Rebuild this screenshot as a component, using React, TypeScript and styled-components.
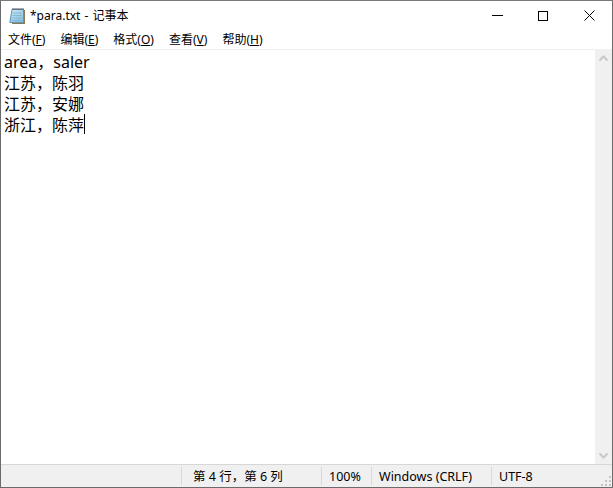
import styled, { createGlobalStyle } from 'styled-components'

const GlobalStyle = createGlobalStyle`
  html, body {
    margin: 0;
    padding: 0;
    background: #fff;
  }
`

const uiFont = `"Noto Sans", "Noto Sans CJK SC", sans-serif`

const Window = styled.div`
  box-sizing: border-box;
  width: 613px;
  height: 488px;
  border: 1px solid #6b6b6b;
  border-top-color: #7a7a7a;
  display: flex;
  flex-direction: column;
  background: #fff;
  font-family: ${uiFont};
  color: #000;
`

const TitleBar = styled.div`
  height: 29px;
  display: flex;
  align-items: center;
  flex: none;
`

const AppIcon = styled.svg`
  width: 17px;
  height: 18px;
  margin-left: 8px;
  flex: none;
`

const Title = styled.div`
  margin-left: 4px;
  font-size: 12px;
  line-height: 29px;
  word-spacing: 1px;
  flex: 1;
  white-space: pre;
`

const WinButtons = styled.div`
  display: flex;
`

const WinButton = styled.div`
  width: 46px;
  height: 29px;
  display: flex;
  align-items: center;
  justify-content: center;
  flex: none;
`

const MenuBar = styled.div`
  height: 19px;
  padding: 1px 0 0 7px;
  box-sizing: border-box;
  display: flex;
  gap: 15px;
  align-items: center;
  font-size: 12px;
  flex: none;
`

const MenuItem = styled.span`
  white-space: pre;
  line-height: 18px;
  u {
    text-underline-offset: 1px;
  }
`

const Divider = styled.div`
  height: 1px;
  background: #f0f0f0;
  flex: none;
`

const Body = styled.div`
  flex: 1;
  min-height: 0;
  display: flex;
`

const Editor = styled.div`
  flex: 1;
  padding: 2px 0 0 3px;
  font-size: 16px;
  line-height: 21px;
`

const Line = styled.div`
  height: 21px;
  white-space: pre;
  display: flex;
  align-items: center;
`

const Caret = styled.span`
  width: 1px;
  height: 20px;
  margin-top: -1px;
  align-self: flex-start;
  background: #000;
  flex: none;
`

const ScrollBar = styled.div`
  width: 17px;
  background: #f0f0f0;
  display: flex;
  flex-direction: column;
  justify-content: space-between;
  align-items: center;
  flex: none;
`

const ScrollArrow = styled.svg`
  width: 17px;
  height: 17px;
  display: block;
`

const StatusBar = styled.div`
  height: 22px;
  flex: none;
  background: #f0f0f0;
  border-top: 1px solid #d7d7d7;
  display: flex;
  align-items: stretch;
  font-size: 12.5px;
  position: relative;
`

const StatusCell = styled.div<{ $width: number; $pad: number; $first?: boolean }>`
  width: ${p => p.$width}px;
  box-sizing: border-box;
  padding-left: ${p => p.$pad}px;
  line-height: 23px;
  white-space: pre;
  flex: ${p => (p.$first ? '1' : 'none')};
  position: relative;
  &::before {
    content: '';
    position: absolute;
    left: 0;
    top: 2px;
    bottom: 2px;
    width: 1px;
    background: ${p => (p.$first ? 'transparent' : '#d9d9d9')};
  }
`

const Grip = styled.svg`
  position: absolute;
  right: 0;
  bottom: 0;
  width: 12px;
  height: 12px;
`

const lines = ['area，saler', '江苏，陈羽', '江苏，安娜']

export default function App() {
  return (
    <>
      <GlobalStyle />
      <Window>
        <TitleBar>
          <AppIcon viewBox="0 0 17 18">
            <defs>
              <linearGradient id="page" x1="0" y1="0" x2="1" y2="1">
                <stop offset="0" stopColor="#cfe9f6" />
                <stop offset="1" stopColor="#7fbcdc" />
              </linearGradient>
            </defs>
            <path d="M4 3 L16 3 L16 17 L3 17 Z" fill="#8d7b58" />
            <path d="M3 2.5 L14.5 2.5 L14.5 15.5 L0.8 15.5 Z" fill="url(#page)" stroke="#5d93b3" strokeWidth="1" />
            <path d="M3.5 6h9M3.2 8.5h9.3M2.8 11h9.7M2.4 13.5h10" stroke="#6fa9ca" strokeWidth="1" opacity="0.6" />
            <path d="M3.5 2h11" stroke="#555" strokeWidth="2" strokeDasharray="1 1" />
          </AppIcon>
          <Title>*para.txt - 记事本</Title>
          <WinButtons>
            <WinButton>
              <svg width="11" height="11" viewBox="0 0 11 11">
                <path d="M0 5.5h11" stroke="#000" strokeWidth="1" />
              </svg>
            </WinButton>
            <WinButton>
              <svg width="10" height="10" viewBox="0 0 10 10">
                <rect x="0.5" y="0.5" width="9" height="9" fill="none" stroke="#000" />
              </svg>
            </WinButton>
            <WinButton>
              <svg width="11" height="11" viewBox="0 0 11 11">
                <path d="M0.5 0.5L10.5 10.5M10.5 0.5L0.5 10.5" stroke="#000" strokeWidth="1" />
              </svg>
            </WinButton>
          </WinButtons>
        </TitleBar>
        <MenuBar>
          <MenuItem>文件(<u>F</u>)</MenuItem>
          <MenuItem>编辑(<u>E</u>)</MenuItem>
          <MenuItem>格式(<u>O</u>)</MenuItem>
          <MenuItem>查看(<u>V</u>)</MenuItem>
          <MenuItem>帮助(<u>H</u>)</MenuItem>
        </MenuBar>
        <Divider />
        <Body>
          <Editor>
            {lines.map(l => (
              <Line key={l}>{l}</Line>
            ))}
            <Line>
              浙江，陈萍
              <Caret />
            </Line>
          </Editor>
          <ScrollBar>
            <ScrollArrow viewBox="0 0 17 17">
              <path d="M4.5 10.5L8.5 6.5L12.5 10.5" fill="none" stroke="#c8c8c8" strokeWidth="2" />
            </ScrollArrow>
            <ScrollArrow viewBox="0 0 17 17">
              <path d="M4.5 6.5L8.5 10.5L12.5 6.5" fill="none" stroke="#c8c8c8" strokeWidth="2" />
            </ScrollArrow>
          </ScrollBar>
        </Body>
        <StatusBar>
          <StatusCell $width={180} $pad={0} $first />
          <StatusCell $width={140} $pad={12}>第 4 行，第 6 列</StatusCell>
          <StatusCell $width={50} $pad={8}>100%</StatusCell>
          <StatusCell $width={120} $pad={8}>Windows (CRLF)</StatusCell>
          <StatusCell $width={121} $pad={8}>UTF-8</StatusCell>
          <Grip viewBox="0 0 12 12">
            <path d="M9 1h2v2H9zM5 5h2v2H5zM9 5h2v2H9zM1 9h2v2H1zM5 9h2v2H5zM9 9h2v2H9z" fill="#c4c4c4" />
          </Grip>
        </StatusBar>
      </Window>
    </>
  )
}
